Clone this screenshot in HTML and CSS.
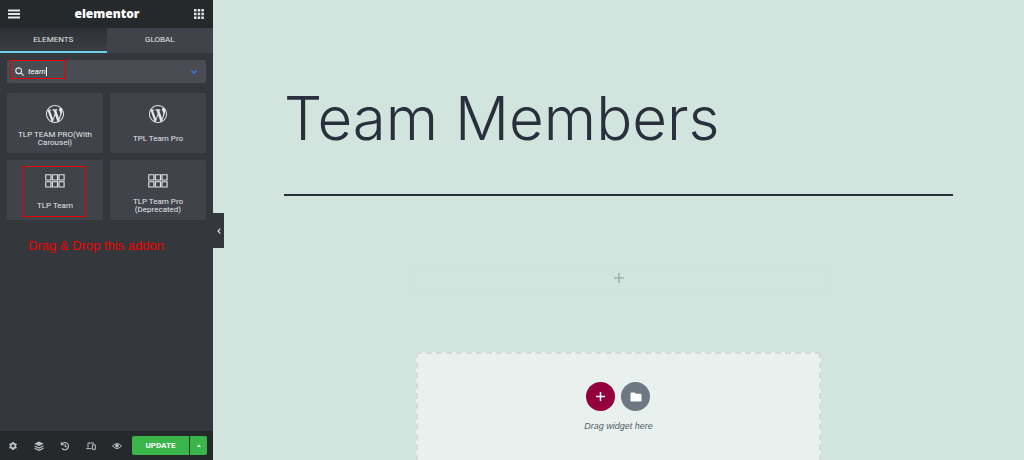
FILE: index.html
```html
<!DOCTYPE html>
<html lang="en">
<head>
<meta charset="utf-8">
<title>Elementor - Team Members</title>
<link rel="stylesheet" href="styles.css">
</head>
<body>
<svg class="defs" aria-hidden="true">
  <symbol id="wordpress" viewBox="0 0 20 20"><path fill="currentColor" d="M20 10c0-5.51-4.49-10-10-10C4.48 0 0 4.49 0 10c0 5.52 4.48 10 10 10 5.51 0 10-4.48 10-10zM7.78 15.37L4.37 6.22c.55-.02 1.17-.08 1.17-.08.5-.06.44-1.13-.06-1.11 0 0-1.45.11-2.37.11-.18 0-.37 0-.58-.01C4.12 2.69 6.87 1.11 10 1.11c2.33 0 4.45.87 6.05 2.34-.68-.11-1.65.39-1.65 1.58 0 .74.45 1.36.9 2.1.35.61.55 1.36.55 2.46 0 1.49-1.4 5-1.4 5l-3.03-8.37c.54-.02.82-.17.82-.17.5-.05.44-1.25-.06-1.22 0 0-1.44.12-2.38.12-.87 0-2.33-.12-2.33-.12-.5-.03-.56 1.2-.06 1.22l.92.08 1.26 3.41zM17.41 10c.24-.64.74-1.87.43-4.25.7 1.29 1.05 2.71 1.05 4.25 0 3.29-1.73 6.24-4.4 7.78.97-2.59 1.94-5.2 2.92-7.78zM6.1 18.09C3.12 16.65 1.11 13.53 1.11 10c0-1.3.23-2.48.72-3.59C3.25 10.3 4.67 14.2 6.1 18.09zm4.03-6.63l2.58 6.98c-.86.29-1.76.45-2.71.45-.79 0-1.57-.11-2.29-.33.81-2.38 1.62-4.74 2.42-7.1z"/></symbol>
  <symbol id="gallery" viewBox="0 0 20 14"><path fill="none" stroke="currentColor" stroke-width="1.1" d="M.8.8h5.1v5.2H.8zM7.4.8h5.1v5.2H7.4zM14 .8h5.1v5.2H14zM.8 7.8h5.1V13H.8zM7.4 7.8h5.1V13H7.4zM14 7.8h5.1V13H14z"/></symbol>
</svg>
<div class="editor">
  <aside class="panel">
    <header class="panel-header">
      <button class="icon-button" aria-label="Menu"><svg width="12" height="10" viewBox="0 0 12 10"><path stroke="currentColor" stroke-width="1.8" d="M0 1.5h12M0 5h12M0 8.5h12"/></svg></button>
      <span class="brand">elementor</span>
      <button class="icon-button" aria-label="Widgets"><svg width="10" height="10" viewBox="0 0 10 10"><path fill="currentColor" d="M0 0h2.5v2.5H0zM3.7 0h2.5v2.5H3.7zM7.4 0h2.5v2.5H7.4zM0 3.7h2.5v2.5H0zM3.7 3.7h2.5v2.5H3.7zM7.4 3.7h2.5v2.5H7.4zM0 7.4h2.5v2.5H0zM3.7 7.4h2.5v2.5H3.7zM7.4 7.4h2.5v2.5H7.4z"/></svg></button>
    </header>
    <nav class="tabs">
      <button class="tab tab-active">ELEMENTS</button>
      <button class="tab">GLOBAL</button>
    </nav>
    <div class="panel-body">
      <div class="search">
        <svg width="9" height="9" viewBox="0 0 9 9" fill="none" stroke="currentColor" stroke-width="1.2"><circle cx="3.7" cy="3.7" r="2.9"/><path d="M5.8 5.8 8.5 8.5"/></svg>
        <input class="search-input" type="text" value="team" aria-label="Search widget">
        <span class="caret"></span>
        <svg class="chevron" width="6" height="4" viewBox="0 0 6 4" fill="none" stroke="currentColor" stroke-width="1.4"><path d="M.6.7 3 3 5.4.7"/></svg>
        <span class="mark mark-search"></span>
      </div>
      <div class="widgets">
        <button class="widget"><span class="widget-icon"><svg width="18" height="18"><use href="#wordpress"/></svg></span><span class="widget-name">TLP TEAM PRO(With Carousel)</span></button>
        <button class="widget"><span class="widget-icon"><svg width="18" height="18"><use href="#wordpress"/></svg></span><span class="widget-name">TPL Team Pro</span></button>
        <button class="widget"><span class="widget-icon"><svg width="20" height="14"><use href="#gallery"/></svg></span><span class="widget-name">TLP Team</span><span class="mark mark-widget"></span></button>
        <button class="widget"><span class="widget-icon"><svg width="20" height="14"><use href="#gallery"/></svg></span><span class="widget-name">TLP Team Pro (Deprecated)</span></button>
      </div>
      <p class="hint">Drag &amp; Drop this addon</p>
    </div>
    <footer class="panel-footer">
      <div class="tools">
        <button class="icon-button" aria-label="Settings"><svg width="10" height="10" viewBox="0 0 10 10"><g stroke="currentColor" stroke-width="2"><path d="M5 1v8M1.5 3l7 4M8.5 3l-7 4"/></g><circle cx="5" cy="5" r="2.3" fill="#26292c" stroke="currentColor" stroke-width="1.7"/></svg></button>
        <button class="icon-button" aria-label="Navigator"><svg width="10" height="10" viewBox="0 0 10 10"><path fill="currentColor" d="M5 .5 9.7 2.8 5 5.1.3 2.8z"/><path fill="none" stroke="currentColor" stroke-width="1.1" d="M.5 5 5 7.1 9.5 5M.5 7.2 5 9.3l4.5-2.1"/></svg></button>
        <button class="icon-button" aria-label="History"><svg width="10" height="10" viewBox="0 0 10 10" fill="none" stroke="currentColor" stroke-width="1.1"><path d="M1.8 3.3A3.6 3.6 0 1 1 2 7.3M5.2 3v2.3l1.6.8"/><path d="M1.3 1.2v2.5h2.6"/></svg></button>
        <button class="icon-button" aria-label="Responsive mode"><svg width="10" height="10" viewBox="0 0 10 10" fill="none" stroke="currentColor"><path d="M2 6.6V2h6M.2 7.6h5.3M6.4 3.8h2.9v4.6H6.4z"/></svg></button>
        <button class="icon-button" aria-label="Preview"><svg width="10" height="8" viewBox="0 0 10 8"><path fill="none" stroke="currentColor" d="M.6 4Q5-1 9.4 4 5 9 .6 4z"/><circle cx="5" cy="3.8" r="1.8" fill="currentColor"/></svg></button>
      </div>
      <div class="publish">
        <button class="update">UPDATE</button>
        <button class="update-more" aria-label="Save options"><svg width="4" height="3" viewBox="0 0 4 3"><path fill="currentColor" d="M0 3 2 .4 4 3z"/></svg></button>
      </div>
    </footer>
    <button class="collapse" aria-label="Hide panel"><svg width="4" height="6" viewBox="0 0 4 6" fill="none" stroke="currentColor" stroke-width="1.1"><path d="M3.3.6 1 3l2.3 2.4"/></svg></button>
  </aside>
  <main class="canvas">
    <h1 class="title">Team Members</h1>
    <button class="add-inline" aria-label="Add section"><svg width="10" height="10" viewBox="0 0 10 10"><path stroke="currentColor" stroke-width="1.6" d="M5 0v10M0 5h10"/></svg></button>
    <section class="drop-area">
      <div class="drop-actions">
        <button class="round round-add" aria-label="Add new section"><svg width="9" height="9" viewBox="0 0 9 9"><path stroke="currentColor" stroke-width="1.5" d="M4.5 0v9M0 4.5h9"/></svg></button>
        <button class="round round-folder" aria-label="Add template"><svg width="12" height="10" viewBox="0 0 12 10"><path fill="currentColor" d="M1.3.5h3.4L6 1.8h4.5q1 0 1 1v5.7q0 1-1 1h-9q-1 0-1-1V1.5q0-1 .8-1z"/></svg></button>
      </div>
      <p class="drop-text">Drag widget here</p>
    </section>
  </main>
</div>
</body>
</html>
```

FILE: styles.css
```css
* { box-sizing: border-box; }
body { margin: 0; font-family: Roboto, "Liberation Sans", sans-serif; }
button { margin: 0; padding: 0; border: 0; background: none; color: inherit; font: inherit; cursor: pointer; }
svg { display: block; flex: none; }
p, h1 { margin: 0; }
.defs { position: absolute; width: 0; height: 0; }

.editor { display: flex; height: 100vh; overflow: hidden; background: #d1e4dd; }

.panel { position: relative; display: flex; flex-direction: column; flex: none; width: 213px; background: #34373c; color: #e3e5e8; }
.panel-header { display: flex; align-items: center; justify-content: space-between; height: 28px; padding: 0 9px 0 8px; background: #26292c; }
.brand { color: #fff; font: 800 12px/26px "Open Sans", sans-serif; }
.icon-button { display: flex; align-items: center; justify-content: center; }

.tabs { display: flex; height: 25px; }
.tab { flex: 1; border-bottom: 2px solid #404349; background: #404349; font-size: 8px; line-height: 23px; }
.tab-active { background: linear-gradient(#2d3034, #3b3e43); border-bottom-color: #6ed0e8; }

.panel-body { flex: 1; padding: 7px; }
.search { position: relative; display: flex; align-items: center; height: 23px; padding: 0 9px 0 8px; border-radius: 2px; background: #494c53; }
.search-input { field-sizing: content; margin-left: 4px; padding: 0; border: 0; outline: 0; background: none; color: #fff; font: italic 8px/12px Roboto, sans-serif; }
.caret { width: 1px; height: 9px; background: #fff; }
.chevron { margin-left: auto; color: #2f7be0; }
.widgets { display: grid; grid-template-columns: 1fr 1fr; gap: 7px; margin-top: 10px; }
.widget { position: relative; display: flex; flex-direction: column; align-items: center; height: 60px; padding: 10px 8px 0; border-radius: 2px; background: #404349; }
.widget-icon { display: flex; align-items: center; height: 22px; }
.widget-name { display: flex; align-items: center; height: 27px; font-size: 8px; line-height: 8px; text-align: center; }
.mark { position: absolute; border: 1px solid #e60000; pointer-events: none; }
.mark-search { left: 3px; top: 0; width: 56px; height: 19px; }
.mark-widget { left: 15px; top: 6px; width: 64px; height: 51px; }
.hint { margin: 18px 0 0 21px; color: #f00000; font: 13px/16px "Liberation Sans", sans-serif; white-space: nowrap; }

.panel-footer { display: flex; align-items: center; justify-content: space-between; height: 29px; padding: 0 6px 0 8px; background: #26292c; color: #b9c2c9; }
.tools { display: flex; gap: 16px; }
.publish { display: flex; gap: 1px; height: 19px; color: #fff; }
.update { width: 57px; border-radius: 2px 0 0 2px; background: #39b54a; font-size: 8px; font-weight: 700; }
.update-more { display: flex; align-items: center; justify-content: center; width: 17px; border-radius: 0 2px 2px 0; background: #39b54a; }
.collapse { position: absolute; left: 100%; top: 213px; display: flex; align-items: center; justify-content: center; width: 11px; height: 35px; background: #34373c; }

.canvas { display: flex; flex: 1; flex-direction: column; align-items: center; min-width: 0; padding: 78px 71px 0; }
.title { align-self: stretch; padding-bottom: 36px; border-bottom: 2px solid #28303d; color: #28303d; font: 300 60px/80px Inter, sans-serif; }
.add-inline { display: flex; align-items: center; justify-content: center; flex: none; width: 63%; height: 22px; margin-top: 71px; border: 1px dashed #cde0da; color: #9eb0b1; }
.drop-area { flex: none; width: 60.5%; height: 160px; margin-top: 63px; padding-top: 28px; border: 2px dashed #d5dadf; background: #e8f1ee; }
.drop-actions { display: flex; justify-content: center; gap: 6px; }
.round { display: flex; align-items: center; justify-content: center; width: 29px; height: 29px; border-radius: 50%; color: #fff; }
.round-add { background: #93003c; }
.round-folder { background: #6d7882; }
.drop-text { margin-top: 8px; color: #545f66; font: italic 9px/14px "Liberation Sans", sans-serif; text-align: center; }
```
